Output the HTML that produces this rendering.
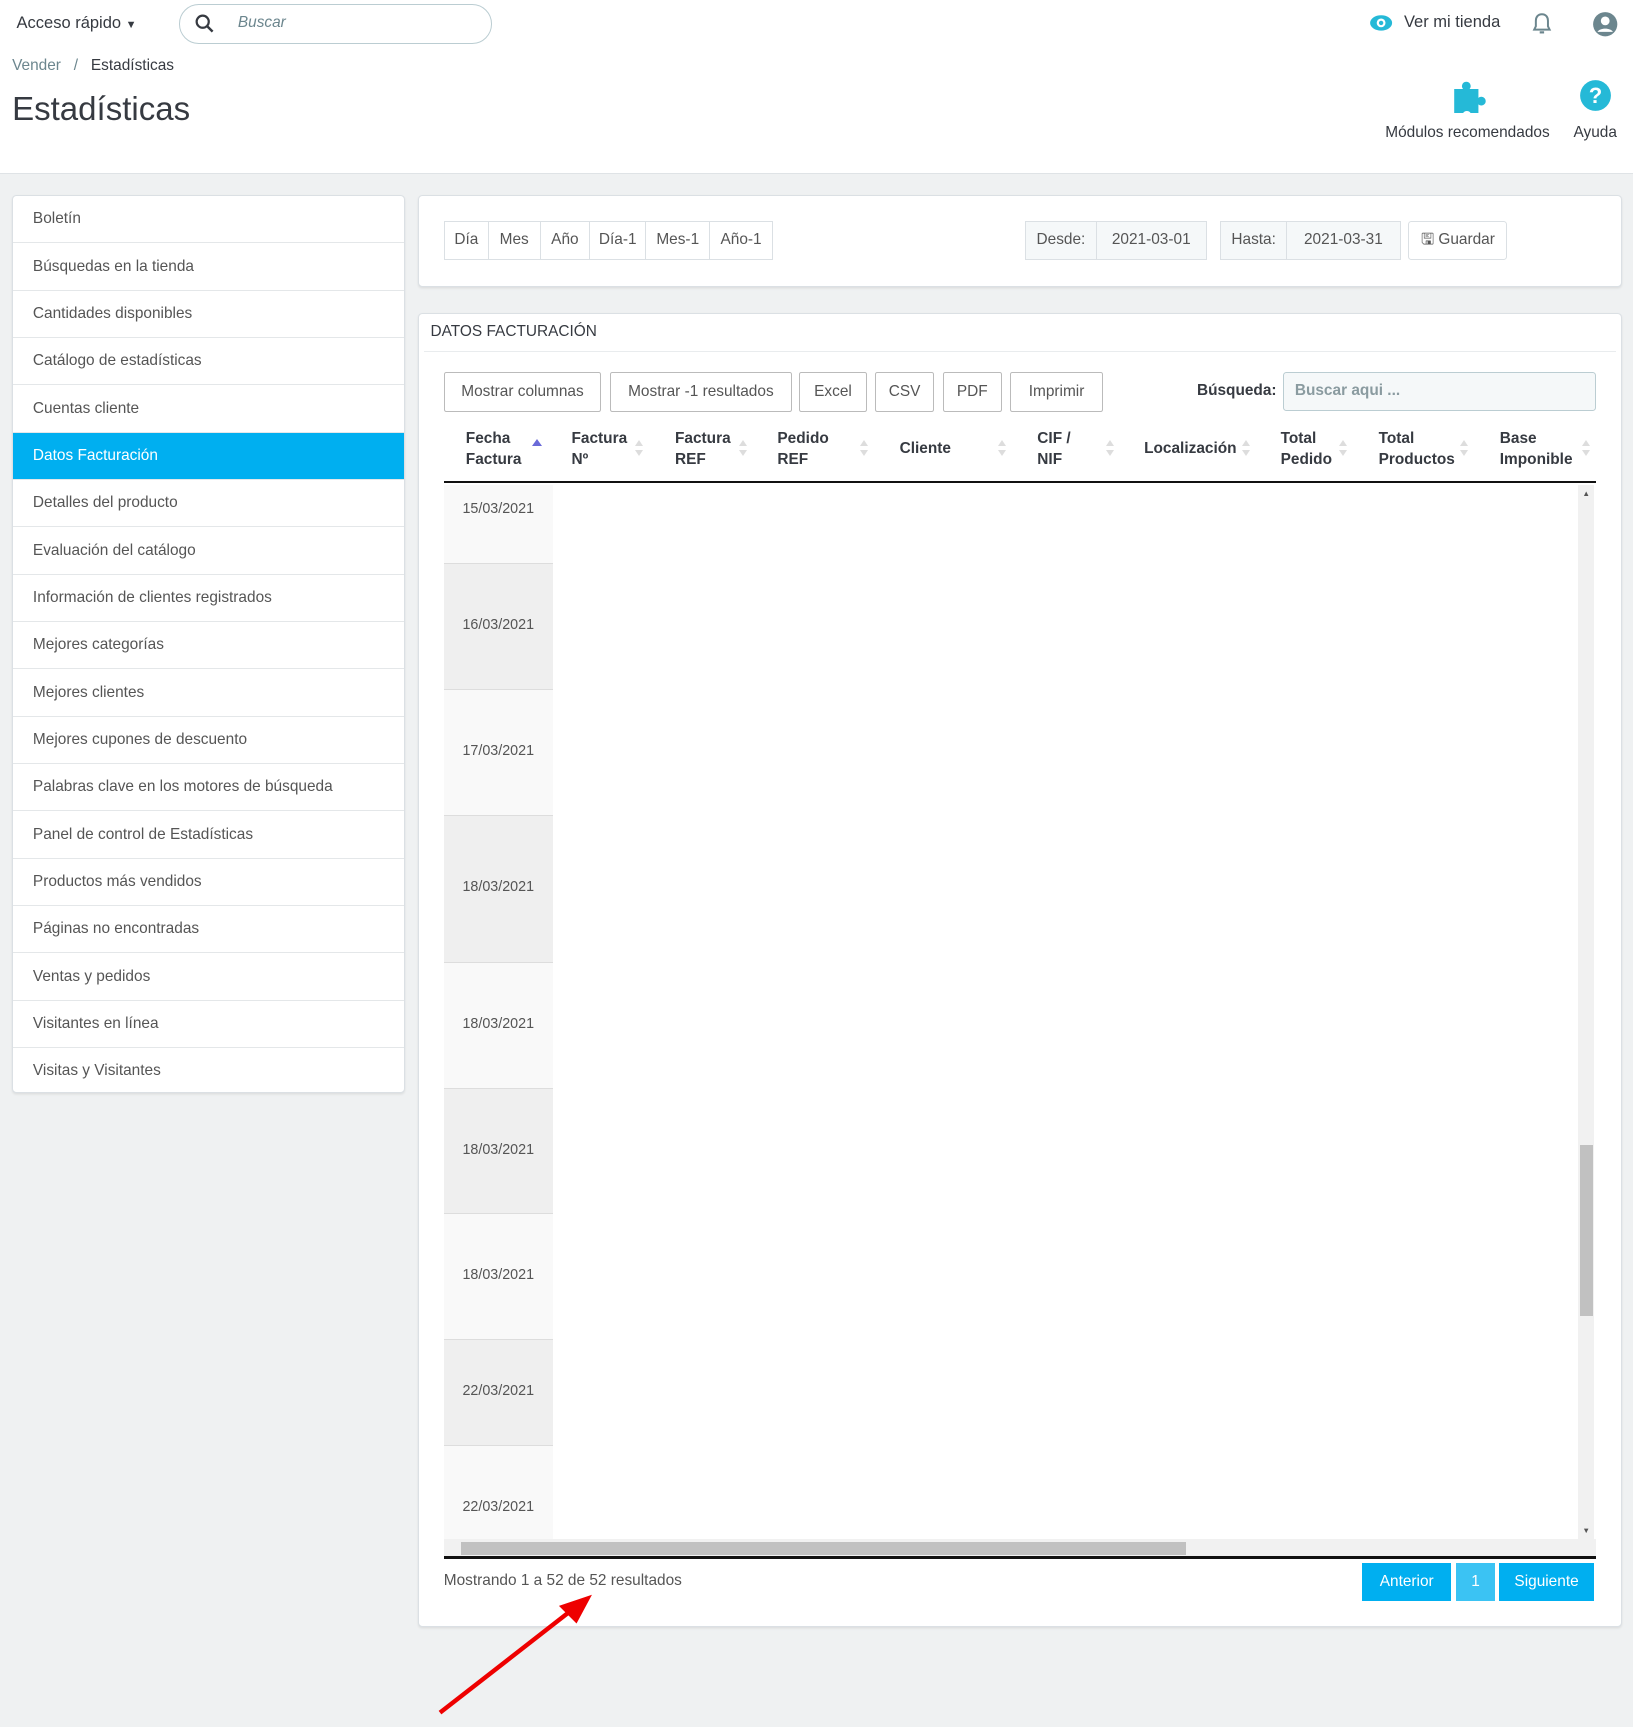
<!DOCTYPE html>
<html><head><meta charset="utf-8"><style>
*{box-sizing:border-box;margin:0;padding:0}
html,body{width:1633px;height:1727px;overflow:hidden;background:#eff1f2}
#w{zoom:1.10115;position:relative;width:1483px;height:1568px;font-family:"Liberation Sans",sans-serif;color:#363a41;font-size:14px}
.a{position:absolute}
.hdr{left:0;top:0;width:1483px;height:158px;background:#fff;border-bottom:1px solid #dfe3e6}
.card{background:#fff;border:1px solid #dbe0e4;border-radius:4px;box-shadow:0 1px 2px rgba(0,0,0,.08)}
.side div{height:43px;border-bottom:1px solid #e4e7e9;padding:13px 0 0 18px;font-size:14px;color:#555}
.side div.act{background:#00aff0;color:#fff}
.btn{position:absolute;border:1px solid #bbb;border-radius:2px;height:36px;font-size:14px;color:#555;text-align:center;line-height:34px;background:#fff}
.seg{position:absolute;top:201px;height:35px;border:1px solid #dbe0e4;line-height:33px;font-size:14px;color:#555;text-align:center;background:#fff}
.th{position:absolute;font-weight:bold;font-size:14px;line-height:19px;color:#363a41}
.sort{position:absolute;width:8px;height:16px}
.sort:before{content:"";position:absolute;left:0;top:0;border:4px solid transparent;border-bottom:6px solid #ddd;border-top:0}
.sort:after{content:"";position:absolute;left:0;top:9px;border:4px solid transparent;border-top:6px solid #ddd;border-bottom:0}
.dt{position:absolute;left:403px;width:99px;font-size:13px;color:#555;text-align:center}
</style></head><body><div id="w">
<div class="a hdr"></div>
<div class="a" style="left:15px;top:13px;font-size:15px;color:#363a41">Acceso rápido <span style="font-size:10px">▼</span></div>
<div class="a" style="left:163px;top:4px;width:284px;height:36px;border:1px solid #bbcdd2;border-radius:18px"></div>
<svg class="a" style="left:177px;top:13px" width="18" height="18" viewBox="0 0 18 18"><circle cx="7" cy="7" r="5.5" fill="none" stroke="#363a41" stroke-width="2"/><path d="M11 11l5 5" stroke="#363a41" stroke-width="2.2"/></svg>
<div class="a" style="left:216px;top:13px;font-style:italic;color:#6c868e;font-size:14px">Buscar</div>
<svg class="a" style="left:1243px;top:12px" width="22" height="18" viewBox="0 0 22 18"><ellipse cx="11" cy="9" rx="10" ry="7" fill="#25b9d7"/><circle cx="11" cy="9" r="4" fill="#fff"/><circle cx="11" cy="9" r="2" fill="#25b9d7"/></svg>
<div class="a" style="left:1275px;top:12px;font-size:15px;color:#363a41">Ver mi tienda</div>
<svg class="a" style="left:1391px;top:11px" width="18" height="22" viewBox="0 0 18 22"><path d="M9 2c-3.5 0-5.5 2.5-5.5 6v5L2 16h14l-1.5-3V8C14.5 4.5 12.5 2 9 2z" fill="none" stroke="#6c868e" stroke-width="1.8"/><path d="M7 18.5h4" stroke="#6c868e" stroke-width="2"/></svg>
<svg class="a" style="left:1446px;top:10px" width="24" height="24" viewBox="0 0 24 24"><circle cx="12" cy="12" r="11" fill="#6c868e"/><circle cx="12" cy="9" r="4" fill="#fff"/><path d="M5 19c2-4 12-4 14 0" fill="#fff"/></svg>
<div class="a" style="left:11px;top:52px;font-size:14px;color:#6c868e">Vender&nbsp;&nbsp; / &nbsp;&nbsp;<span style="color:#363a41">Estadísticas</span></div>
<div class="a" style="left:11px;top:82px;font-size:30px;color:#363a41">Estadísticas</div>
<svg class="a" style="left:1319px;top:71px" width="33" height="32" viewBox="0 0 33 32"><path d="M2 10h8a4 4 0 1 1 6 0h8v8a4 4 0 1 1 0 6v8h-7a4 4 0 0 0-7 0H2z" fill="#25b9d7"/></svg>
<div class="a" style="left:1258px;top:113px;font-size:14px;color:#363a41">Módulos recomendados</div>
<svg class="a" style="left:1434px;top:72px" width="30" height="30" viewBox="0 0 30 30"><circle cx="15" cy="15" r="14" fill="#25b9d7"/><text x="15" y="22" text-anchor="middle" font-family="Liberation Sans" font-weight="bold" font-size="20" fill="#fff">?</text></svg>
<div class="a" style="left:1429px;top:113px;font-size:14px;color:#363a41">Ayuda</div>

<div class="a card side" style="left:11px;top:177px;width:357px;height:816px;overflow:hidden">
<div>Boletín</div><div>Búsquedas en la tienda</div><div>Cantidades disponibles</div><div>Catálogo de estadísticas</div><div>Cuentas cliente</div><div class="act">Datos Facturación</div><div>Detalles del producto</div><div>Evaluación del catálogo</div><div>Información de clientes registrados</div><div>Mejores categorías</div><div>Mejores clientes</div><div>Mejores cupones de descuento</div><div>Palabras clave en los motores de búsqueda</div><div>Panel de control de Estadísticas</div><div>Productos más vendidos</div><div>Páginas no encontradas</div><div>Ventas y pedidos</div><div>Visitantes en línea</div><div style="border:0">Visitas y Visitantes</div>
</div>

<div class="a card" style="left:380px;top:177px;width:1093px;height:84px"></div>
<div class="seg" style="left:403px;width:41px">Día</div>
<div class="seg" style="left:443px;width:48px">Mes</div>
<div class="seg" style="left:490px;width:46px">Año</div>
<div class="seg" style="left:535px;width:52px">Día-1</div>
<div class="seg" style="left:586px;width:59px">Mes-1</div>
<div class="seg" style="left:644px;width:58px">Año-1</div>
<div class="seg" style="left:931px;width:65px;background:#f5f8f9">Desde:</div>
<div class="seg" style="left:995px;width:101px;background:#f5f8f9">2021-03-01</div>
<div class="seg" style="left:1108px;width:61px;background:#f5f8f9">Hasta:</div>
<div class="seg" style="left:1168px;width:104px;background:#f5f8f9">2021-03-31</div>
<div class="seg" style="left:1279px;width:90px;border-radius:3px">🖫 Guardar</div>

<div class="a card" style="left:380px;top:284px;width:1093px;height:1194px"></div>
<div class="a" style="left:391px;top:293px;font-size:14px;color:#363a41">DATOS FACTURACIÓN</div>
<div class="a" style="left:385px;top:319px;width:1083px;height:1px;background:#e9ecee"></div>
<div class="btn" style="left:403px;top:338px;width:143px">Mostrar columnas</div>
<div class="btn" style="left:554px;top:338px;width:165px">Mostrar -1 resultados</div>
<div class="btn" style="left:726px;top:338px;width:61px">Excel</div>
<div class="btn" style="left:795px;top:338px;width:53px">CSV</div>
<div class="btn" style="left:856px;top:338px;width:54px">PDF</div>
<div class="btn" style="left:917px;top:338px;width:85px">Imprimir</div>
<div class="a" style="left:1087px;top:347px;font-weight:bold;font-size:14px">Búsqueda:</div>
<div class="a" style="left:1165px;top:338px;width:284px;height:35px;border:1px solid #bbcdd2;border-radius:3px;background:#f5f8f9;padding:8px 10px;color:#8a9ba0;font-weight:bold;font-size:14px">Buscar aqui ...</div>

<div class="th" style="left:423px;top:390px">Fecha<br>Factura</div>
<div class="a" style="left:483px;top:399px;border:5px solid transparent;border-bottom:7px solid #6a6ad8;border-top:0"></div>
<div class="th" style="left:519px;top:390px">Factura<br>Nº</div><div class="sort" style="left:577px;top:400px"></div>
<div class="th" style="left:613px;top:390px">Factura<br>REF</div><div class="sort" style="left:671px;top:400px"></div>
<div class="th" style="left:706px;top:390px">Pedido<br>REF</div><div class="sort" style="left:781px;top:400px"></div>
<div class="th" style="left:817px;top:399px">Cliente</div><div class="sort" style="left:906px;top:400px"></div>
<div class="th" style="left:942px;top:390px">CIF /<br>NIF</div><div class="sort" style="left:1004px;top:400px"></div>
<div class="th" style="left:1039px;top:399px">Localización</div><div class="sort" style="left:1128px;top:400px"></div>
<div class="th" style="left:1163px;top:390px">Total<br>Pedido</div><div class="sort" style="left:1216px;top:400px"></div>
<div class="th" style="left:1252px;top:390px">Total<br>Productos</div><div class="sort" style="left:1326px;top:400px"></div>
<div class="th" style="left:1362px;top:390px">Base<br>Imponible</div><div class="sort" style="left:1437px;top:400px"></div>
<div class="a" style="left:403px;top:437px;width:1046px;height:2px;background:#111"></div>

<div class="a" style="left:403px;top:440px;width:99px;height:71px;background:#f9f9f9"></div>
<div class="a" style="left:403px;top:511px;width:99px;height:115px;background:#efefef;border-top:1px solid #ddd"></div>
<div class="a" style="left:403px;top:626px;width:99px;height:114px;background:#f9f9f9;border-top:1px solid #ddd"></div>
<div class="a" style="left:403px;top:740px;width:99px;height:134px;background:#efefef;border-top:1px solid #ddd"></div>
<div class="a" style="left:403px;top:874px;width:99px;height:114px;background:#f9f9f9;border-top:1px solid #ddd"></div>
<div class="a" style="left:403px;top:988px;width:99px;height:114px;background:#efefef;border-top:1px solid #ddd"></div>
<div class="a" style="left:403px;top:1102px;width:99px;height:114px;background:#f9f9f9;border-top:1px solid #ddd"></div>
<div class="a" style="left:403px;top:1216px;width:99px;height:96px;background:#efefef;border-top:1px solid #ddd"></div>
<div class="a" style="left:403px;top:1312px;width:99px;height:86px;background:#f9f9f9;border-top:1px solid #ddd"></div>
<div class="dt" style="top:455px">15/03/2021</div>
<div class="dt" style="top:560px">16/03/2021</div>
<div class="dt" style="top:675px">17/03/2021</div>
<div class="dt" style="top:798px">18/03/2021</div>
<div class="dt" style="top:923px">18/03/2021</div>
<div class="dt" style="top:1037px">18/03/2021</div>
<div class="dt" style="top:1151px">18/03/2021</div>
<div class="dt" style="top:1256px">22/03/2021</div>
<div class="dt" style="top:1361px">22/03/2021</div>

<div class="a" style="left:1433px;top:440px;width:15px;height:958px;background:#f1f1f1"></div>
<div class="a" style="left:1435px;top:1040px;width:12px;height:155px;background:#c1c1c1"></div>
<div class="a" style="left:1437px;top:444px;font-size:7px;color:#555">▲</div>
<div class="a" style="left:1437px;top:1386px;font-size:7px;color:#555">▼</div>
<div class="a" style="left:403px;top:1398px;width:1046px;height:15px;background:#f1f1f1"></div>
<div class="a" style="left:419px;top:1400px;width:658px;height:12px;background:#c1c1c1"></div>
<div class="a" style="left:403px;top:1413px;width:1046px;height:3px;background:#111"></div>

<div class="a" style="left:403px;top:1428px;font-size:14px;color:#555">Mostrando 1 a 52 de 52 resultados</div>
<div class="a" style="left:1237px;top:1419px;width:81px;height:35px;background:#00aff0;color:#fff;text-align:center;line-height:35px;font-size:14px">Anterior</div>
<div class="a" style="left:1322px;top:1419px;width:36px;height:35px;background:#3bc3f3;color:#fff;text-align:center;line-height:35px;font-size:14px">1</div>
<div class="a" style="left:1361px;top:1419px;width:87px;height:35px;background:#00aff0;color:#fff;text-align:center;line-height:35px;font-size:14px">Siguiente</div>

<svg class="a" style="left:390px;top:1440px" width="160" height="125" viewBox="0 0 160 125"><path d="M10 115L132 20" stroke="#e00" stroke-width="4"/><path d="M148 8L118 18L134 34z" fill="#e00"/></svg>
</div></body></html>
